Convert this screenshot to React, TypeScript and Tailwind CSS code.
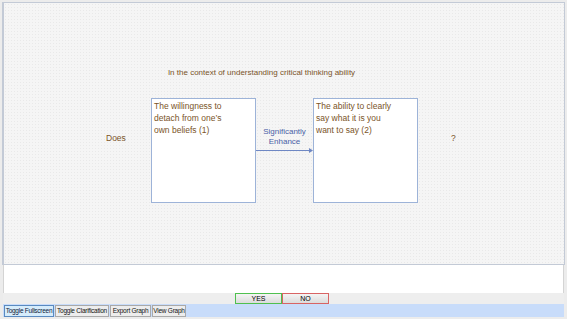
export default function App() {
  const font = { fontFamily: '"Liberation Sans", Arial, sans-serif' };
  return (
    <div
      className="w-[567px] h-[319px] bg-[#ececec] flex flex-col overflow-hidden text-[#7a5428]"
      style={font}
    >
      {/* graph canvas */}
      <div className="mx-[2px] mt-[2px] h-[263px] border border-[#c3cad6] border-l-[2px] bg-[#f5f5f5] bg-[radial-gradient(#e9e9e9_0.6px,transparent_0.7px)] bg-[length:3px_3px] flex flex-col">
        <div className="pt-[64px] pr-[45px] text-center text-[8px] leading-[12px]">
          In the context of understanding critical thinking ability
        </div>
        <div className="mt-[19px] flex items-start pl-[102px]">
          <div className="mt-[34px] w-[24px] text-[8.5px] leading-[12px]">Does</div>
          <div className="ml-[21px] w-[105px] h-[105px] bg-white border border-[#9db3d8] px-[2px] pt-[1px] text-[8.5px] leading-[12px]">
            The willingness to
            <br />
            detach from one&rsquo;s
            <br />
            own beliefs (1)
          </div>
          <div className="w-[57px] h-[105px] flex flex-col items-center">
            <div className="mt-[29px] text-center text-[8px] leading-[10px] text-[#4a62a6]">
              Significantly
              <br />
              Enhance
            </div>
            <div className="mt-[1px] w-full flex items-center">
              <div className="flex-1 h-px bg-[#6f88c4]" />
              <svg width="4" height="5" viewBox="0 0 4 5" className="block">
                <path d="M0 0 L4 2.5 L0 5 Z" fill="#6f88c4" />
              </svg>
            </div>
          </div>
          <div className="w-[105px] h-[105px] bg-white border border-[#9db3d8] px-[2px] pt-[1px] text-[8.5px] leading-[12px]">
            The ability to clearly
            <br />
            say what it is you
            <br />
            want to say (2)
          </div>
          <div className="mt-[34px] ml-[33px] text-[8.5px] leading-[12px]">?</div>
        </div>
      </div>

      {/* clarification area */}
      <div className="mx-[3px] h-[28px] bg-white border-x border-[#d4d4d4]" />

      {/* answer strip */}
      <div className="mx-[3px] h-[11px] bg-[#eeeeee] flex items-start pl-[232px]">
        <button className="w-[47px] h-[11px] border border-[#4fc04f] bg-gradient-to-b from-[#f4f4f4] to-[#dcdcdc] text-[7px] leading-[9px] text-black">
          YES
        </button>
        <button className="w-[47px] h-[11px] border border-[#d86464] bg-gradient-to-b from-[#f4f4f4] to-[#dcdcdc] text-[7px] leading-[9px] text-black">
          NO
        </button>
      </div>

      {/* toolbar */}
      <div className="mx-[3px] h-[13px] bg-[#c8dcfa] flex items-center gap-[1px] pl-[1px]">
        <button className="w-[50px] h-[12px] border border-[#5a8ac0] bg-[#d6ecfb] text-[6.5px] leading-[10px] tracking-[-0.25px] text-[#10203a] whitespace-nowrap">
          Toggle Fullscreen
        </button>
        <button className="w-[54px] h-[12px] border border-[#a9a9a9] bg-[#ededed] text-[6.5px] leading-[10px] tracking-[-0.25px] text-[#111] whitespace-nowrap">
          Toggle Clarification
        </button>
        <button className="w-[41px] h-[12px] border border-[#a9a9a9] bg-[#ededed] text-[6.5px] leading-[10px] tracking-[-0.25px] text-[#111] whitespace-nowrap">
          Export Graph
        </button>
        <button className="w-[34px] h-[12px] border border-[#a9a9a9] bg-[#ededed] text-[6.5px] leading-[10px] tracking-[-0.25px] text-[#111] whitespace-nowrap">
          View Graph
        </button>
      </div>
    </div>
  );
}
